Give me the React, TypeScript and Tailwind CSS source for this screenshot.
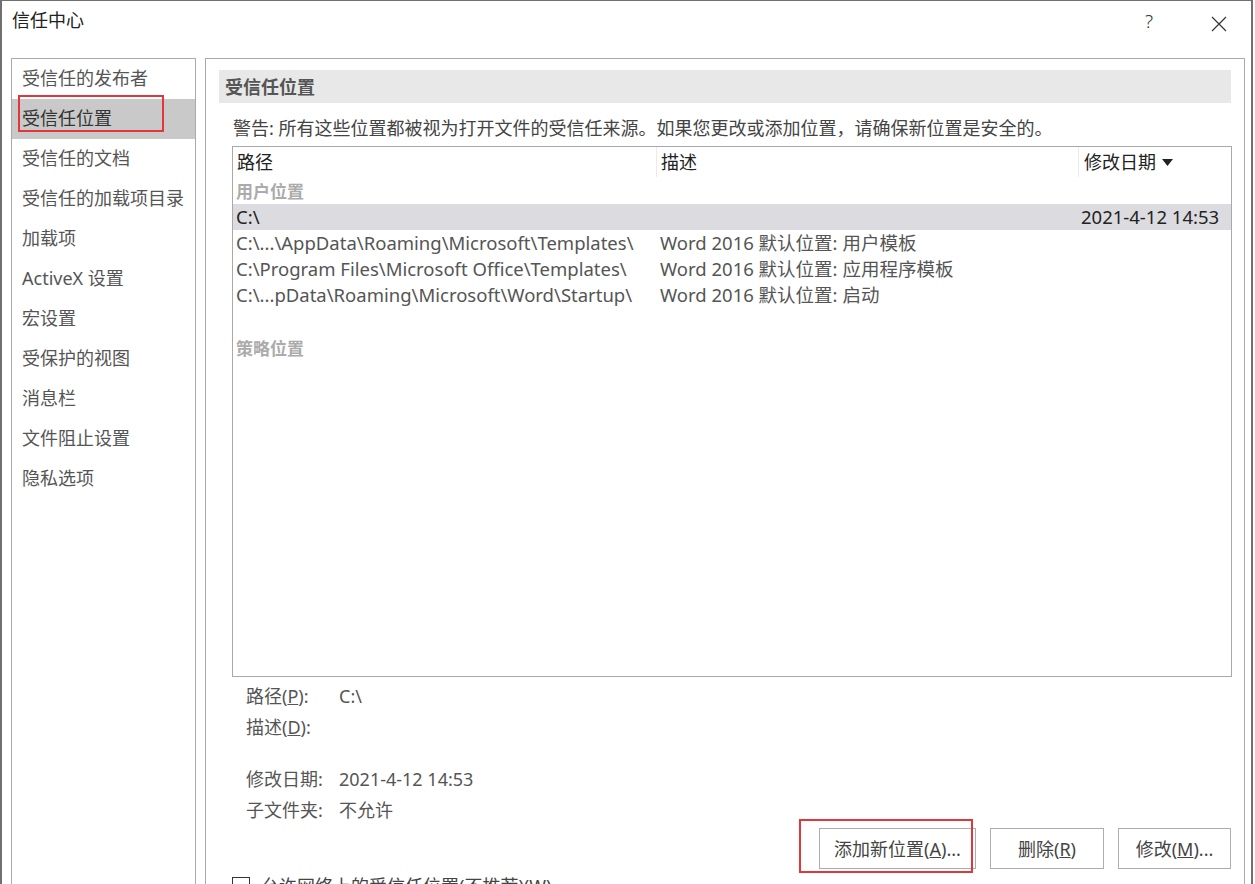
import React from 'react';

const navItems = [
  '受信任的发布者',
  '受信任位置',
  '受信任的文档',
  '受信任的加载项目录',
  '加载项',
  'ActiveX 设置',
  '宏设置',
  '受保护的视图',
  '消息栏',
  '文件阻止设置',
  '隐私选项',
];

const userRows = [
  { path: 'C:\\...\\AppData\\Roaming\\Microsoft\\Templates\\', desc: 'Word 2016 默认位置: 用户模板' },
  { path: 'C:\\Program Files\\Microsoft Office\\Templates\\', desc: 'Word 2016 默认位置: 应用程序模板' },
  { path: 'C:\\...pData\\Roaming\\Microsoft\\Word\\Startup\\', desc: 'Word 2016 默认位置: 启动' },
];

function Nav() {
  return (
    <div className="w-[185px] shrink-0 border border-[#a9a9a9]">
      {navItems.map((label, i) => (
        <div
          key={label}
          className={
            i === 1
              ? 'relative h-[40px] flex items-center pl-[10px] pb-[2px] bg-[#c9c9c9] text-[#333]'
              : 'relative h-[40px] flex items-center pl-[10px] pb-[2px] text-[#555]'
          }
        >
          {label}
          {i === 1 && (
            <div className="absolute left-[6px] top-[-4px] w-[146px] h-[37px] border-2 border-[#e0363c]" />
          )}
        </div>
      ))}
    </div>
  );
}

function Table() {
  return (
    <div className="ml-[26px] mr-[12px] h-[531px] border border-[#a9a9a9] text-[#555] text-[18.5px]">
      {/* header */}
      <div className="flex h-[30px] items-center text-[#222] text-[18px]">
        <div className="w-[424px] pl-[4px] h-full flex items-center border-r border-[#eaeaea]">路径</div>
        <div className="w-[422px] pl-[4px] h-full flex items-center border-r border-[#eaeaea]">描述</div>
        <div className="flex-1 pl-[5px] flex items-center gap-[6px]">
          修改日期
          <svg width="11" height="7" viewBox="0 0 11 7"><path d="M0 0h11L5.5 7z" fill="#222" /></svg>
        </div>
      </div>
      <div className="h-[27px] flex items-center pl-[3px] pt-[1px] font-bold text-[17px] text-[#ababab]">用户位置</div>
      <div className="flex h-[26px] items-center bg-[#dcdce0] text-[#222]">
        <div className="w-[424px] pl-[3px]">C:\</div>
        <div className="w-[422px] pl-[4px]" />
        <div className="flex-1 pl-[2px] whitespace-nowrap">2021-4-12 14:53</div>
      </div>
      {userRows.map((r) => (
        <div key={r.path} className="flex h-[26px] items-center">
          <div className="w-[424px] pl-[3px] whitespace-nowrap">{r.path}</div>
          <div className="w-[422px] pl-[3px] whitespace-nowrap">{r.desc}</div>
          <div className="flex-1" />
        </div>
      ))}
      <div className="h-[27px]" />
      <div className="h-[26px] flex items-center pl-[3px] font-bold text-[17px] text-[#ababab]">策略位置</div>
    </div>
  );
}

function Detail({ label, value }: { label: React.ReactNode; value?: string }) {
  return (
    <div className="flex h-[31px] items-center text-[#555]">
      <div className="w-[93px]">{label}</div>
      <div>{value}</div>
    </div>
  );
}

function Button({ children, w }: { children: React.ReactNode; w: string }) {
  return (
    <div className={`${w} h-[41px] border border-[#adadad] bg-white flex items-center justify-center text-[#444]`}>
      {children}
    </div>
  );
}

export default function App() {
  return (
    <div className="w-[1255px] h-[884px] overflow-hidden bg-white font-['Noto_Sans','Noto_Sans_CJK_SC',sans-serif] text-[18px] leading-none">
      <div className="w-[1253px] h-[900px] border-l-2 border-r-2 border-t border-[#707070]">
        {/* title bar */}
        <div className="flex h-[57px] items-start">
          <div className="pl-[10px] pt-[10px] text-[#222] flex-1">信任中心</div>
          <div className="pt-[11px] text-[#333] text-[19px] font-light mr-[58px]">?</div>
          <svg className="mt-[15px] mr-[24px]" width="16" height="16" viewBox="0 0 16 16">
            <path d="M1 1L15 15M15 1L1 15" stroke="#333" strokeWidth="1.2" />
          </svg>
        </div>
        <div className="flex gap-[9px] pl-[9px] h-[900px]">
          <Nav />
          <div className="w-[1040px] shrink-0 border border-[#a9a9a9] pt-[11px]">
            <div className="ml-[13px] mr-[13px] h-[33px] bg-[#e8e8e8] flex items-center pl-[6px] font-bold text-[#555]">
              受信任位置
            </div>
            <div className="ml-[27px] mt-[16px] mb-[9px] h-[18px] text-[#444]">
              警告: 所有这些位置都被视为打开文件的受信任来源。如果您更改或添加位置，请确保新位置是安全的。
            </div>
            <Table />
            <div className="ml-[40px] mt-[3px]">
              <Detail label={<>路径(<u>P</u>):</>} value="C:\" />
              <Detail label={<>描述(<u>D</u>):</>} />
              <div className="h-[21px]" />
              <Detail label="修改日期:" value="2021-4-12 14:53" />
              <Detail label="子文件夹:" value="不允许" />
            </div>
            <div className="flex justify-end gap-[14px] mr-[13px] mt-[3px]">
              <div className="relative">
                <Button w="w-[157px]">添加新位置(<u>A</u>)...</Button>
                <div className="absolute left-[-20px] top-[-9px] w-[174px] h-[54px] border-2 border-[#e0363c]" />
              </div>
              <Button w="w-[114px]">删除(<u>R</u>)</Button>
              <Button w="w-[113px]">修改(<u>M</u>)...</Button>
            </div>
            <div className="flex items-start gap-[11px] ml-[26px] mt-[8px] text-[#444]">
              <div className="w-[18px] h-[18px] border border-[#333] bg-white shrink-0" />
              <div>允许网络上的受信任位置(不推荐)(<u>W</u>)</div>
            </div>
          </div>
        </div>
      </div>
    </div>
  );
}
